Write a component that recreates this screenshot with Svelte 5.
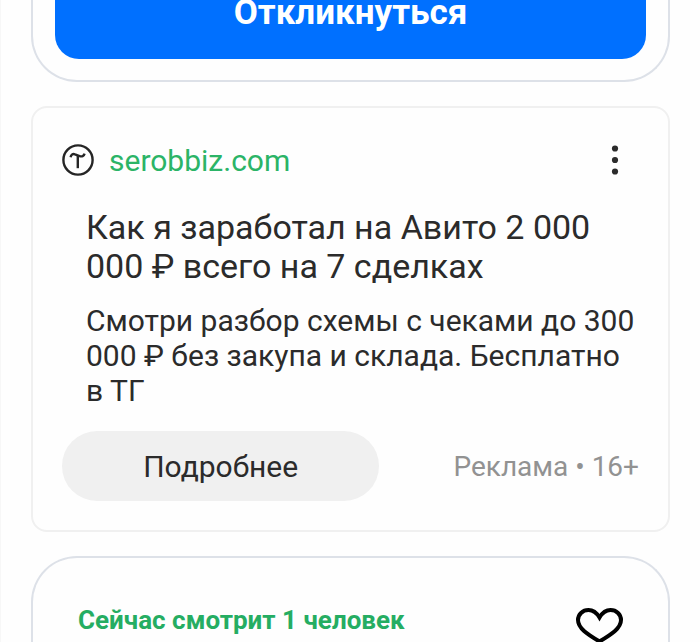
<script lang="ts">
  const ad = {
    site: 'serobbiz.com',
    title: 'Как я заработал на Авито 2 000 000 ₽ всего на 7 сделках',
    text: 'Смотри разбор схемы с чеками до 300 000 ₽ без закупа и склада. Бесплатно в ТГ',
    note: 'Реклама • 16+'
  };

  let viewers = 1;
  let liked = false;

  function toggleLike() {
    liked = !liked;
  }
</script>

<main class="feed">
  <section class="card vacancy">
    <button class="respond">Откликнуться</button>
  </section>

  <section class="card ad">
    <header class="ad-header">
      <svg class="logo" viewBox="0 0 32 32" aria-hidden="true">
        <circle cx="16" cy="16" r="14.6" />
        <path d="M8.600 13.200c.4-2.600 2.200-3.700 4.400-2.800l4.600 1.700c2.200.8 4.300.1 5-2.500" />
        <path d="M15.800 12v12.200" />
      </svg>
      <a class="site" href="#ad">{ad.site}</a>
      <button class="menu" aria-label="Меню">
        <svg viewBox="0 0 8 32" aria-hidden="true">
          <circle cx="4" cy="4.5" r="3.1" />
          <circle cx="4" cy="16" r="3.1" />
          <circle cx="4" cy="27.5" r="3.1" />
        </svg>
      </button>
    </header>

    <div class="ad-body">
      <h2>{ad.title}</h2>
      <p>{ad.text}</p>
    </div>

    <footer class="ad-footer">
      <button class="more">Подробнее</button>
      <span class="note">{ad.note}</span>
    </footer>
  </section>

  <section class="card next">
    <span class="viewers">Сейчас смотрит {viewers} человек</span>
    <button class="like" aria-label="В избранное" aria-pressed={liked} on:click={toggleLike}>
      <svg viewBox="0 0 48 38" aria-hidden="true">
        <path d="M24.500 9.500C21.500 4.500 18 2 13.500 2C7.500 2 3 6.500 3 12C3 20.500 13 26.500 24.500 33.500C36 26.500 46 20.500 46 12C46 6.500 41.500 2 35.500 2C31 2 27.500 4.500 24.500 9.500Z" />
      </svg>
    </button>
  </section>
</main>

<style>
  :global(body) {
    background: #fefefe;
    overflow: hidden;
  }

  .feed {
    display: flex;
    flex-direction: column;
    gap: 24px;
    box-sizing: border-box;
    height: 100vh;
    padding: 0 30px;
    border-left: 1px solid #f7f7f7;
    overflow: hidden;
    font-family: Roboto, "Noto Sans", sans-serif;
    color: #2b2b2b;
  }

  button {
    margin: 0;
    padding: 0;
    border: none;
    background: none;
    font-family: inherit;
    color: inherit;
    cursor: pointer;
  }

  svg {
    display: block;
  }

  .card {
    border: 2px solid #dde1e8;
    border-radius: 46px;
    background: #fefefe;
  }

  .vacancy {
    padding: 0 22px 21px;
    border-top: none;
    border-top-left-radius: 0;
    border-top-right-radius: 0;
  }

  .respond {
    display: block;
    width: 100%;
    padding-bottom: 33px;
    border-radius: 0 0 24px 24px;
    background: #0070ff;
    color: #fff;
    font-size: 35px;
    font-weight: 700;
    line-height: 26px;
  }

  .ad {
    padding: 36px 29px 29px;
    border-color: #f0f0f0;
    border-radius: 16px;
  }

  .ad-header {
    display: flex;
    align-items: center;
    gap: 15px;
    height: 32px;
  }

  .logo {
    width: 32px;
    height: 32px;
    fill: none;
    stroke: #252525;
    stroke-width: 2.4;
  }

  .site {
    flex: 1;
    color: #2bb467;
    font-size: 30px;
    text-decoration: none;
  }

  .menu {
    width: 8px;
    margin-right: 20px;
  }

  .menu svg {
    fill: #2b2b2b;
  }

  .ad-body {
    padding: 32px 0 0 24px;
  }

  h2 {
    margin: 0 0 17px;
    font-size: 34px;
    font-weight: 400;
    line-height: 39px;
  }

  p {
    margin: 0;
    font-size: 30px;
    line-height: 35px;
  }

  .ad-footer {
    display: flex;
    align-items: center;
    justify-content: space-between;
    margin-top: 23px;
  }

  .more {
    width: 55%;
    height: 70px;
    border-radius: 35px;
    background: #f0f0f0;
    font-size: 30px;
  }

  .note {
    color: #929292;
    font-size: 28px;
  }

  .next {
    display: flex;
    flex: 1;
    align-items: flex-start;
    justify-content: space-between;
    min-height: 0;
    padding: 50px 45px 0;
    border-bottom: none;
    border-bottom-left-radius: 0;
    border-bottom-right-radius: 0;
    overflow: hidden;
  }

  .viewers {
    color: #25ad62;
    font-size: 26px;
    font-weight: 700;
    line-height: 24px;
  }

  .like svg {
    width: 48px;
    height: 38px;
    fill: none;
    stroke: #000;
    stroke-width: 4;
    stroke-linejoin: miter;
  }
</style>
